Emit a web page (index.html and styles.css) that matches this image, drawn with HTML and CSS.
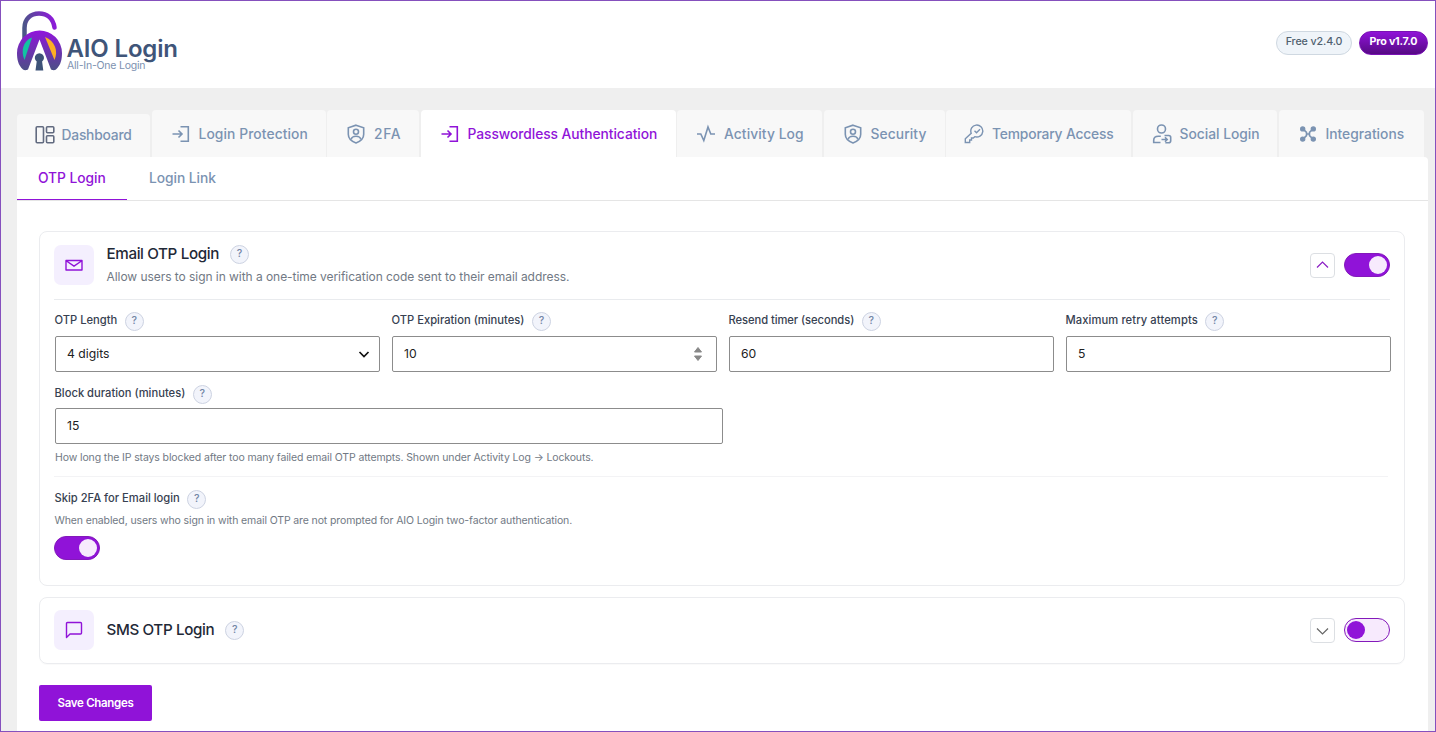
FILE: index.html
```html
<!DOCTYPE html>
<html lang="en">
<head>
    <meta charset="UTF-8">
    <meta name="viewport" content="width=device-width, initial-scale=1.0">
    <title>AIO Login</title>
    <link rel="stylesheet" href="styles.css">
</head>
<body>
    <header class="header">
        <svg class="logo" width="170" height="66" viewBox="0 0 170 66">
            <defs>
                <linearGradient id="shackle" x1="0" x2="1" y1="0.6" y2="0.4">
                    <stop offset="0" stop-color="#4b5688"/>
                    <stop offset="1" stop-color="#8c1bd8"/>
                </linearGradient>
                <linearGradient id="lock" x1="0" x2="0" y1="0" y2="1">
                    <stop offset="0" stop-color="#9115dc"/>
                    <stop offset="1" stop-color="#4b4f86"/>
                </linearGradient>
            </defs>
            <path d="M8.500 29V18C8.500 9 14.500 3.500 23 3.500c8 0 14 4.500 15.500 14" fill="none" stroke="url(#shackle)" stroke-width="4.500" stroke-linecap="round"/>
            <path d="M7 59.500C2 55 1 49 1 43a22.500 22.500 0 0 1 45 0c0 6-1 12-6 16.500q-2 1.500-5 0L23.500 29.500 12 59.500q-3 1.500-5 0z" fill="url(#lock)"/>
            <path d="M8.500 50C4.500 41 7 31 16 27.500z" fill="#12c3a2"/>
            <path d="M38.500 50C42.500 41 39 31 29 27z" fill="#fdb022"/>
            <path d="M14 60.500L23.500 31.500l10 29z" fill="#fff"/>
            <path d="M19.500 60.500l1.200-9a4.600 4.600 0 1 1 5.400 0l1.200 9z" fill="#3d5278"/>
            <text class="logo-name" x="50.500" y="47" textLength="111.500">AIO Login</text>
            <text class="logo-tag" x="51" y="59" textLength="78.500">All-In-One Login</text>
        </svg>
        <div class="versions">
            <span class="version">Free v2.4.0</span>
            <span class="version pro">Pro v1.7.0</span>
        </div>
    </header>

    <main class="main">
        <nav class="tabs">
            <a class="tab dashboard">
                <svg class="icon" viewBox="0 0 20 20"><rect x="1.200" y="1.700" width="7.300" height="16" rx="1"/><rect x="11.500" y="1.700" width="7.300" height="6" rx="1"/><rect x="11.500" y="10.700" width="7.300" height="7" rx="1"/></svg>
                <span>Dashboard</span>
            </a>
            <a class="tab protection">
                <svg class="icon" viewBox="0 0 20 20"><path d="M1.500 10h9M7.500 6.500L11 10l-3.500 3.500M9.500 2.700h7.800v14.600H9.500"/></svg>
                <span>Login Protection</span>
            </a>
            <a class="tab twofa">
                <svg class="icon" viewBox="0 0 20 20"><path d="M10 1.200l7.700 2.600v6.500c0 4-3 7-7.700 8.700-4.700-1.700-7.700-4.700-7.700-8.700V3.800z"/><circle cx="10" cy="7.700" r="2.500"/><path d="M5.300 15.300c.5-2.400 2.200-3 4.700-3s4.200.6 4.700 3"/></svg>
                <span>2FA</span>
            </a>
            <a class="tab active">
                <svg class="icon" viewBox="0 0 20 20"><path d="M1.500 10h9M7.500 6.500L11 10l-3.500 3.500M9.500 2.700h7.800v14.600H9.500"/></svg>
                <span>Passwordless Authentication</span>
            </a>
            <a class="tab protection">
                <svg class="icon" viewBox="0 0 20 20"><path d="M1 10h3.800l3 6.500L12 3l2.800 7H19"/></svg>
                <span>Activity Log</span>
            </a>
            <a class="tab protection">
                <svg class="icon" viewBox="0 0 20 20"><path d="M10 1.200l7.700 2.600v6.500c0 4-3 7-7.700 8.700-4.700-1.700-7.700-4.700-7.700-8.700V3.800z"/><circle cx="10" cy="7.700" r="2.500"/><path d="M5.300 15.300c.5-2.400 2.200-3 4.700-3s4.200.6 4.700 3"/></svg>
                <span>Security</span>
            </a>
            <a class="tab temporary">
                <svg class="icon thin" viewBox="0 0 20 20"><path d="M7.200 9.200a6 6 0 1 1 3.600 3.500L9.300 14H7.500v2H5.700v2.500H1.300v-3.700z"/><path d="M10.500 6.800l2 2 3.500-3.500"/></svg>
                <span>Temporary Access</span>
            </a>
            <a class="tab">
                <svg class="icon" viewBox="0 0 20 20"><circle cx="9.500" cy="5" r="4"/><path d="M8.500 18.500H1.700v-2.200c0-2.500 2-4.100 4.600-4.100h2.500M12.500 11.500h4.200q2 0 2 2v3.300q0 2-2 2h-3.400M9.500 15.500h5.300M13 13.300l2.200 2.200-2.200 2.200"/></svg>
                <span>Social Login</span>
            </a>
            <a class="tab">
                <svg class="icon filled" viewBox="0 0 20 20"><path d="M4.700 4.700l3.800 3.600v3.400l-3.800 3.600M15.300 4.700l-3.800 3.600v3.400l3.800 3.600M8.500 10h3"/><circle cx="4.700" cy="4.900" r="1.900"/><circle cx="15.300" cy="4.900" r="1.900"/><circle cx="4.700" cy="15.100" r="1.900"/><circle cx="15.300" cy="15.100" r="1.900"/></svg>
                <span>Integrations</span>
            </a>
        </nav>

        <section class="panel">
            <nav class="subtabs">
                <a class="subtab active"><span>OTP Login</span></a>
                <a class="subtab"><span>Login Link</span></a>
            </nav>

            <form class="settings">
                <div class="card email">
                    <div class="card-head">
                        <div class="card-icon">
                            <svg width="18" height="18" viewBox="0 0 18 18"><path d="M1 4.500h16v9.500H1zM1.500 5L9 10.200 16.500 5"/></svg>
                        </div>
                        <div class="card-text">
                            <h2 class="card-title"><span>Email OTP Login</span> <span class="help">?</span></h2>
                            <p class="card-desc">Allow users to sign in with a one-time verification code sent to their email address.</p>
                        </div>
                        <button type="button" class="collapse open"><svg width="13" height="13" viewBox="0 0 13 13"><path d="M1 8.500L6.500 3 12 8.500"/></svg></button>
                        <span class="toggle on"></span>
                    </div>

                    <div class="fields">
                        <div class="field">
                            <label class="label"><span>OTP Length</span> <span class="help">?</span></label>
                            <div class="input">4 digits
                                <svg width="12" height="8" viewBox="0 0 12 8"><path d="M1.500 2L6 6.500 10.500 2" fill="none" stroke="#111" stroke-width="1.700"/></svg>
                            </div>
                        </div>
                        <div class="field">
                            <label class="label"><span>OTP Expiration (minutes)</span> <span class="help">?</span></label>
                            <div class="input number">10
                                <svg width="10" height="16" viewBox="0 0 10 16"><path d="M5 1.500L8.500 6h-7zM1.500 10h7L5 14.500z" fill="#888" stroke="#888" stroke-linejoin="round"/></svg>
                            </div>
                        </div>
                        <div class="field">
                            <label class="label resend"><span>Resend timer (seconds)</span> <span class="help">?</span></label>
                            <div class="input">60</div>
                        </div>
                        <div class="field">
                            <label class="label retry"><span>Maximum retry attempts</span> <span class="help">?</span></label>
                            <div class="input">5</div>
                        </div>
                    </div>

                    <div class="field block">
                        <label class="label"><span>Block duration (minutes)</span> <span class="help">?</span></label>
                        <div class="input">15</div>
                        <p class="hint">How long the IP stays blocked after too many failed email OTP attempts. Shown under Activity Log → Lockouts.</p>
                    </div>

                    <div class="skip">
                        <label class="label"><span>Skip 2FA for Email login</span> <span class="help">?</span></label>
                        <p class="hint skip-hint">When enabled, users who sign in with email OTP are not prompted for AIO Login two-factor authentication.</p>
                        <span class="toggle on"></span>
                    </div>
                </div>

                <div class="card sms">
                    <div class="card-head">
                        <div class="card-icon">
                            <svg width="18" height="18" viewBox="0 0 18 18"><path d="M2.500 1.500h13q1 0 1 1v9.500q0 1-1 1H5l-3.500 3.500v-14q0-1 1-1z"/></svg>
                        </div>
                        <div class="card-text">
                            <h2 class="card-title"><span>SMS OTP Login</span> <span class="help">?</span></h2>
                        </div>
                        <button type="button" class="collapse"><svg width="13" height="13" viewBox="0 0 13 13"><path d="M1 4.500L6.500 10 12 4.500"/></svg></button>
                        <span class="toggle"></span>
                    </div>
                </div>

                <button type="button" class="save">Save Changes</button>
            </form>
        </section>
    </main>
</body>
</html>
```

FILE: styles.css
```css
* {
    box-sizing: border-box;
}
body {
    margin: 0;
    height: 732px;
    overflow: hidden;
    border: 1px solid #8550bd;
    background: #efefef;
    font-family: Inter, "Liberation Sans", sans-serif;
    color: #1f2937;
}
h2, p {
    margin: 0;
}
button {
    font-family: inherit;
    padding: 0;
}
.header {
    display: flex;
    justify-content: space-between;
    height: 87px;
    padding: 9px 7px 0 15px;
    background: #fff;
}
.logo-name {
    font-size: 24px;
    font-weight: 600;
    fill: #3f5579;
}
.logo-tag {
    font-size: 10.5px;
    fill: #7d91b0;
}
.versions {
    display: flex;
    gap: 7px;
    padding-top: 21px;
}
.version {
    width: 76px;
    height: 24px;
    border: 1px solid #cfd8e1;
    border-radius: 12px;
    background: #eff4f9;
    color: #50606f;
    font-size: 10.7px;
    font-weight: 500;
    letter-spacing: -0.1px;
    line-height: 20px;
    text-align: center;
}
.version.pro {
    width: 69px;
    border-color: #7a12b5;
    background: linear-gradient(#9013d8, #560a84);
    color: #fff;
    font-weight: 700;
    letter-spacing: -0.2px;
}
.main {
    padding: 22px 7px 0 16px;
}
.tabs {
    display: grid;
    grid-template-columns: 133px 174px 92px 255px 145px 121px 185px 144.5px 145px;
    gap: 1.5px;
    align-items: end;
    height: 47px;
}
.tab {
    display: flex;
    align-items: center;
    gap: 8px;
    height: 47px;
    padding-left: 19px;
    border-radius: 4px 4px 0 0;
    background: #f8f8f8;
    color: #7b93b2;
    font-size: 13.8px;
    font-weight: 500;
    white-space: nowrap;
}
.tab.dashboard {
    gap: 7px;
    height: 43px;
    padding-left: 17.5px;
    padding-bottom: 1px;
    letter-spacing: -0.2px;
}
.tab.dashboard .icon {
    stroke: #626b80;
}
.tab.protection {
    letter-spacing: 0.1px;
}
.tab.twofa {
    letter-spacing: 0.7px;
}
.tab.temporary {
    padding-left: 18px;
    letter-spacing: -0.15px;
}
.tab.active {
    background: #fff;
    color: #9013d8;
    letter-spacing: -0.05px;
}
.icon {
    width: 20px;
    height: 20px;
    fill: none;
    stroke: currentColor;
    stroke-width: 1.6;
}
.icon.thin {
    stroke-width: 1.4;
}
.icon.filled {
    fill: currentColor;
}
.icon.filled path {
    fill: none;
}
.panel {
    height: 600px;
    border-radius: 0 4px 0 0;
    background: #fff;
}
.subtabs {
    display: flex;
    height: 44px;
    border-bottom: 1px solid #e5e5e5;
}
.subtab {
    height: 43px;
    padding: 0 22px;
    color: #7b93b2;
    font-size: 13.8px;
    font-weight: 500;
    letter-spacing: -0.05px;
    line-height: 43px;
}
.subtab.active {
    width: 110px;
    padding: 0 21px;
    border-bottom: 1px solid #9013d8;
    color: #9013d8;
    white-space: nowrap;
}
.settings {
    padding: 30px 23px 0 22px;
}
.card {
    border: 1px solid #ebecef;
    border-radius: 8px;
    padding: 0 14px;
}
.email {
    height: 355px;
}
.sms {
    height: 67px;
    margin-top: 11px;
    padding-top: 12px;
    box-shadow: 0 1px 1px #00000006;
}
.card-head {
    display: flex;
    align-items: center;
    height: 40px;
}
.email .card-head {
    height: 68px;
    padding-bottom: 1px;
    border-bottom: 1px solid #e9ebee;
}
.card-icon {
    display: flex;
    align-items: center;
    justify-content: center;
    width: 40px;
    height: 40px;
    margin-right: 12.5px;
    border-radius: 7px;
    background: #f4effe;
}
.card-icon svg {
    fill: none;
    stroke: #9013d8;
    stroke-width: 1.4;
    stroke-linejoin: round;
}
.card-text {
    flex: 1;
}
.card-title {
    display: flex;
    align-items: center;
    gap: 11px;
    font-size: 15.2px;
    font-weight: 500;
    letter-spacing: -0.37px;
    line-height: 20px;
}
.card-desc {
    padding-top: 3px;
    color: #717984;
    font-size: 12px;
    letter-spacing: -0.05px;
    line-height: 19px;
}
.help {
    width: 19px;
    height: 19px;
    border: 1px solid #cdd3e2;
    border-radius: 50%;
    background: #f2f4fb;
    color: #7385a5;
    font-size: 10.5px;
    font-weight: 500;
    letter-spacing: 0;
    line-height: 16px;
    text-align: center;
}
.collapse {
    display: flex;
    align-items: center;
    justify-content: center;
    width: 25px;
    height: 25px;
    margin-right: 9px;
    border: 1px solid #dcdfe3;
    border-radius: 4px;
    background: #fff;
}
.collapse svg {
    fill: none;
    stroke: #666;
    stroke-width: 1.2;
}
.collapse.open svg {
    stroke: #8b1dc4;
}
.toggle {
    display: block;
    width: 46px;
    height: 24px;
    padding: 2px;
    border: 1px solid #8319ba;
    border-radius: 12px;
    background: #f7eafd;
}
.toggle::before {
    content: "";
    display: block;
    width: 18px;
    height: 18px;
    border-radius: 50%;
    background: #9013d8;
}
.toggle.on {
    background: #9013d8;
}
.toggle.on::before {
    margin-left: 22px;
    background: #f7eafd;
}
.fields {
    display: grid;
    grid-template-columns: repeat(4, 325px);
    gap: 12px;
    padding: 11px 0 0 1px;
}
.label {
    display: flex;
    align-items: center;
    gap: 7.5px;
    height: 20px;
    color: #374151;
    font-size: 11.2px;
    font-weight: 500;
    line-height: 18px;
    white-space: nowrap;
}
.fields .label, .block .label {
    margin-left: -0.5px;
}
.label > span:first-child {
    margin-bottom: 2px;
}
.label.resend {
    letter-spacing: -0.06px;
}
.label.retry {
    letter-spacing: 0.09px;
}
.input {
    display: flex;
    align-items: center;
    justify-content: space-between;
    height: 36px;
    margin-top: 5px;
    padding: 0 9px 1px 11px;
    border: 1px solid #8c8c8c;
    border-radius: 2px;
    color: #222;
    font-size: 12.2px;
}
.input.number {
    padding-right: 13px;
}
.block {
    width: 669px;
    padding: 12px 0 0 1px;
}
.block .input {
    margin-top: 4px;
}
.hint {
    color: #717984;
    font-size: 10.5px;
    letter-spacing: -0.12px;
    line-height: 16px;
    white-space: nowrap;
}
.block .hint {
    padding-top: 6px;
}
.skip {
    height: 90px;
    margin: 10px 2px 0 0;
    padding-top: 12px;
    border-top: 1px solid #f3f3f5;
}
.skip-hint {
    padding: 4px 0 7px 0.5px;
}
.skip .label {
    padding-left: 0.5px;
}
.save {
    display: block;
    width: 113px;
    height: 36px;
    margin-top: 21px;
    border: 0;
    border-radius: 2px;
    background: #9013d8;
    color: #fff;
    font-size: 11.5px;
    font-weight: 600;
    letter-spacing: -0.3px;
}
```
